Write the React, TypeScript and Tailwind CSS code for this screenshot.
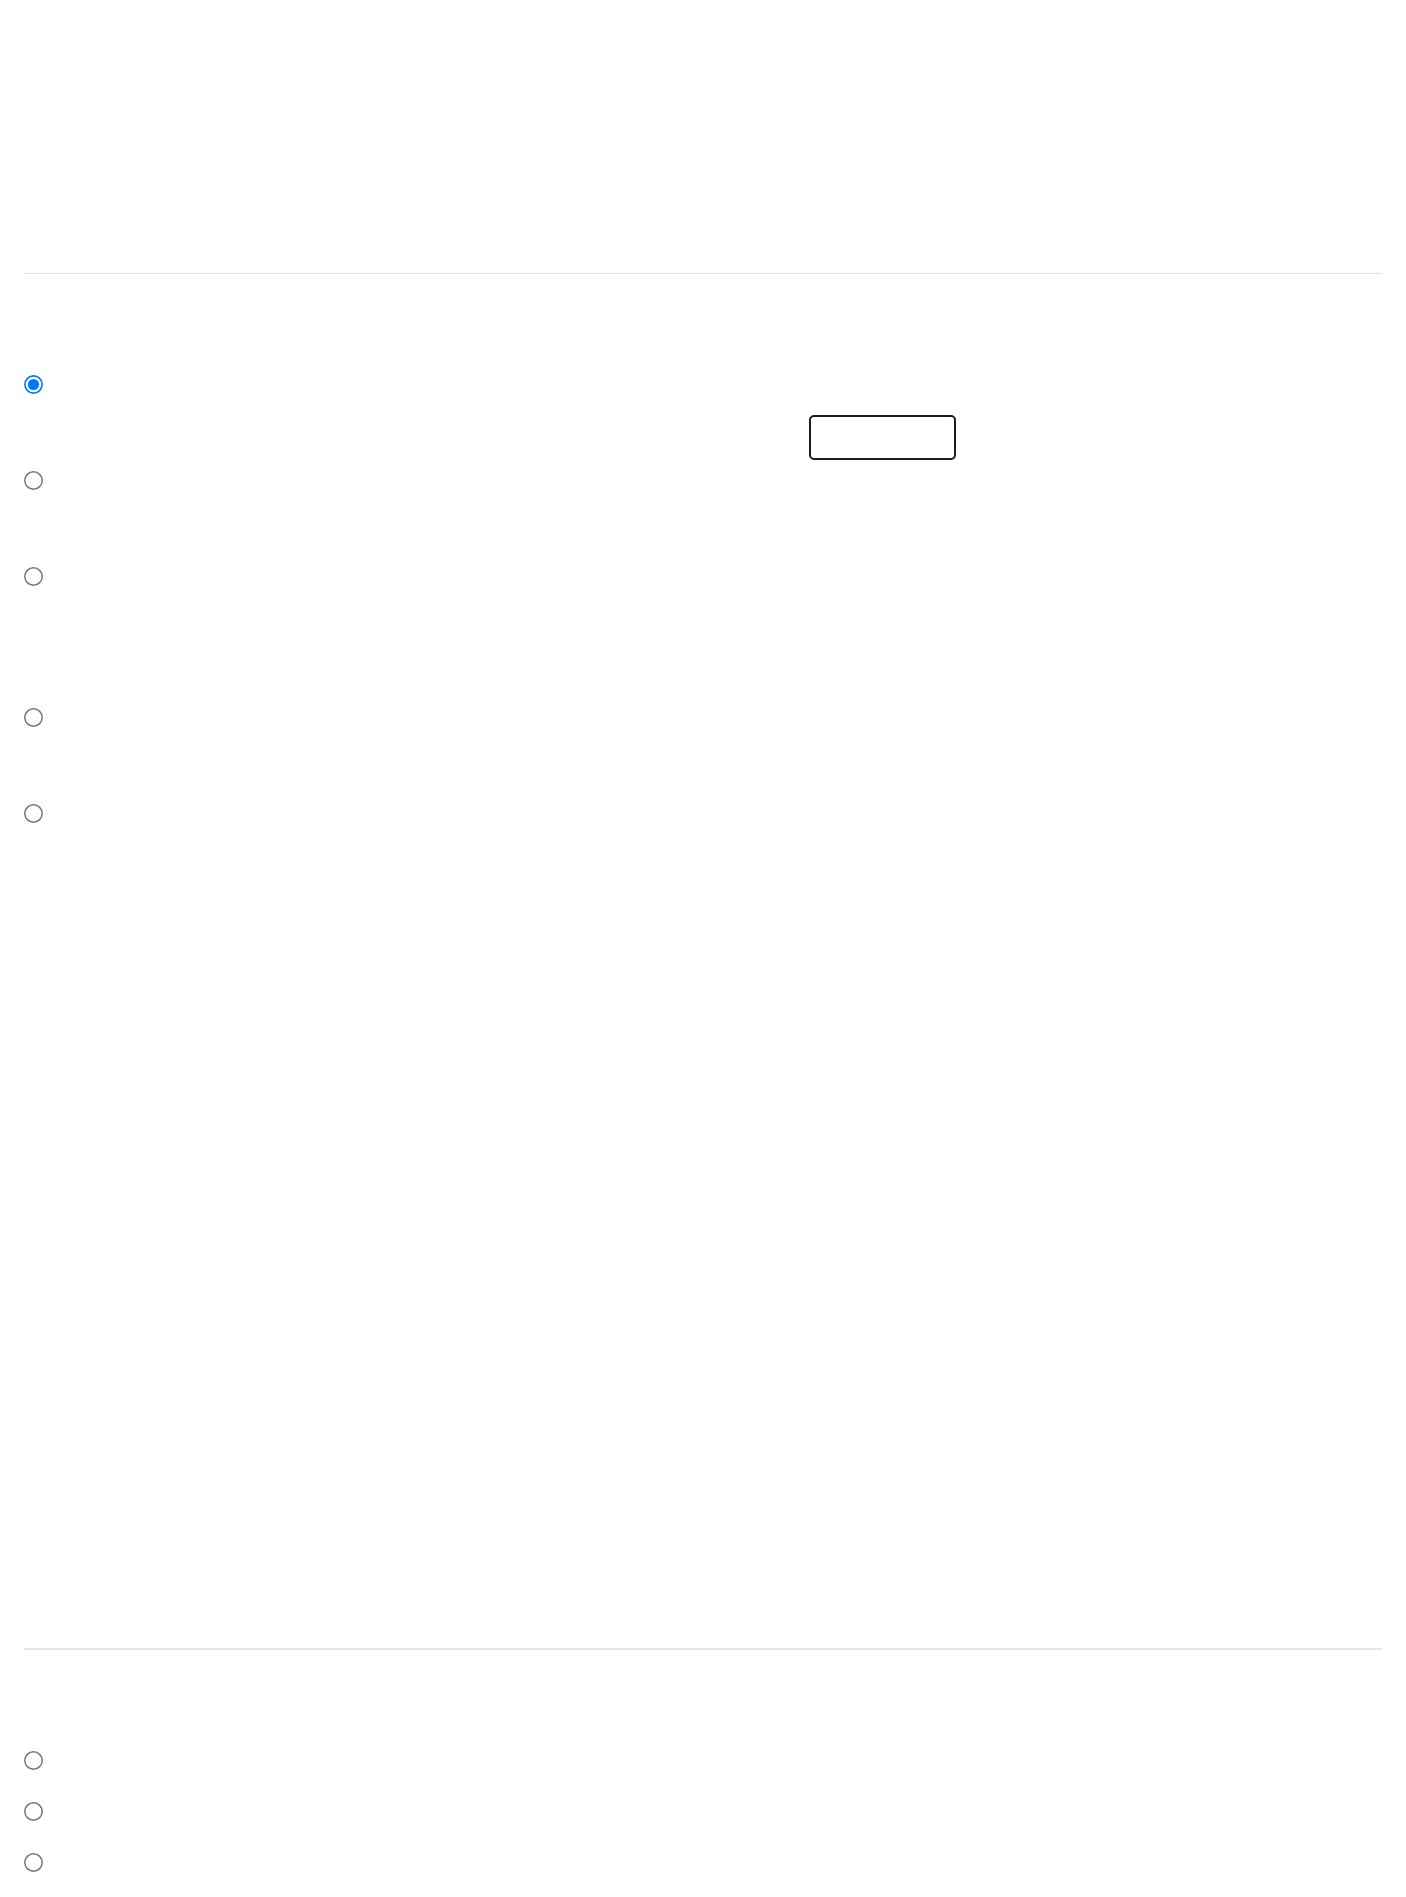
import { useState } from "react";

function Radio({ name, value, checked, onChange }: { name: string; value: string; checked: boolean; onChange: (v: string) => void }) {
    return (
        <label className="relative flex items-center w-[19px] h-[19px] cursor-pointer">
            <input
                type="radio"
                name={name}
                value={value}
                checked={checked}
                onChange={() => onChange(value)}
                className="absolute inset-0 m-0 opacity-0 cursor-pointer"
            />
            {checked ? (
                <svg width="19" height="19" viewBox="0 0 19 19" className="block">
                    <circle cx="9.5" cy="9.5" r="8.6" fill="white" stroke="#0075ff" strokeWidth="1.6" />
                    <circle cx="9.5" cy="9.5" r="5.6" fill="#0075ff" />
                </svg>
            ) : (
                <svg width="19" height="19" viewBox="0 0 19 19" className="block">
                    <circle cx="9.5" cy="9.5" r="8.7" fill="white" stroke="#767676" strokeWidth="1.5" />
                </svg>
            )}
        </label>
    )
}

export default function App() {
    const [plan, setPlan] = useState<string>("a")
    const [extra, setExtra] = useState<string>("")

    return (
        <div className="min-h-[1897px] bg-white px-[24px] font-['Liberation_Sans',sans-serif]">
            {/* header area, nothing drawn */}
            <div className="h-[273px]" />
            <div className="h-px bg-[#e3e3e3]" />

            <div className="flex flex-col mt-[101px]">
                <Radio name="plan" value="a" checked={plan === "a"} onChange={setPlan} />
                <div className="mt-[21px] pl-[785px]">
                    <button className="block w-[147px] h-[45px] border-2 border-[#1c1c1c] rounded-[5px] bg-white" />
                </div>
                <div className="mt-[11px]">
                    <Radio name="plan" value="b" checked={plan === "b"} onChange={setPlan} />
                </div>
                <div className="mt-[77px]">
                    <Radio name="plan" value="c" checked={plan === "c"} onChange={setPlan} />
                </div>
                <div className="mt-[122px]">
                    <Radio name="plan" value="d" checked={plan === "d"} onChange={setPlan} />
                </div>
                <div className="mt-[77px]">
                    <Radio name="plan" value="e" checked={plan === "e"} onChange={setPlan} />
                </div>
            </div>

            <div className="mt-[825px] h-[2px] bg-[#e6e6e6]" />

            <div className="flex flex-col gap-[32px] mt-[101px] pb-[25px]">
                <Radio name="extra" value="x" checked={extra === "x"} onChange={setExtra} />
                <Radio name="extra" value="y" checked={extra === "y"} onChange={setExtra} />
                <Radio name="extra" value="z" checked={extra === "z"} onChange={setExtra} />
            </div>
        </div>
    )
}
